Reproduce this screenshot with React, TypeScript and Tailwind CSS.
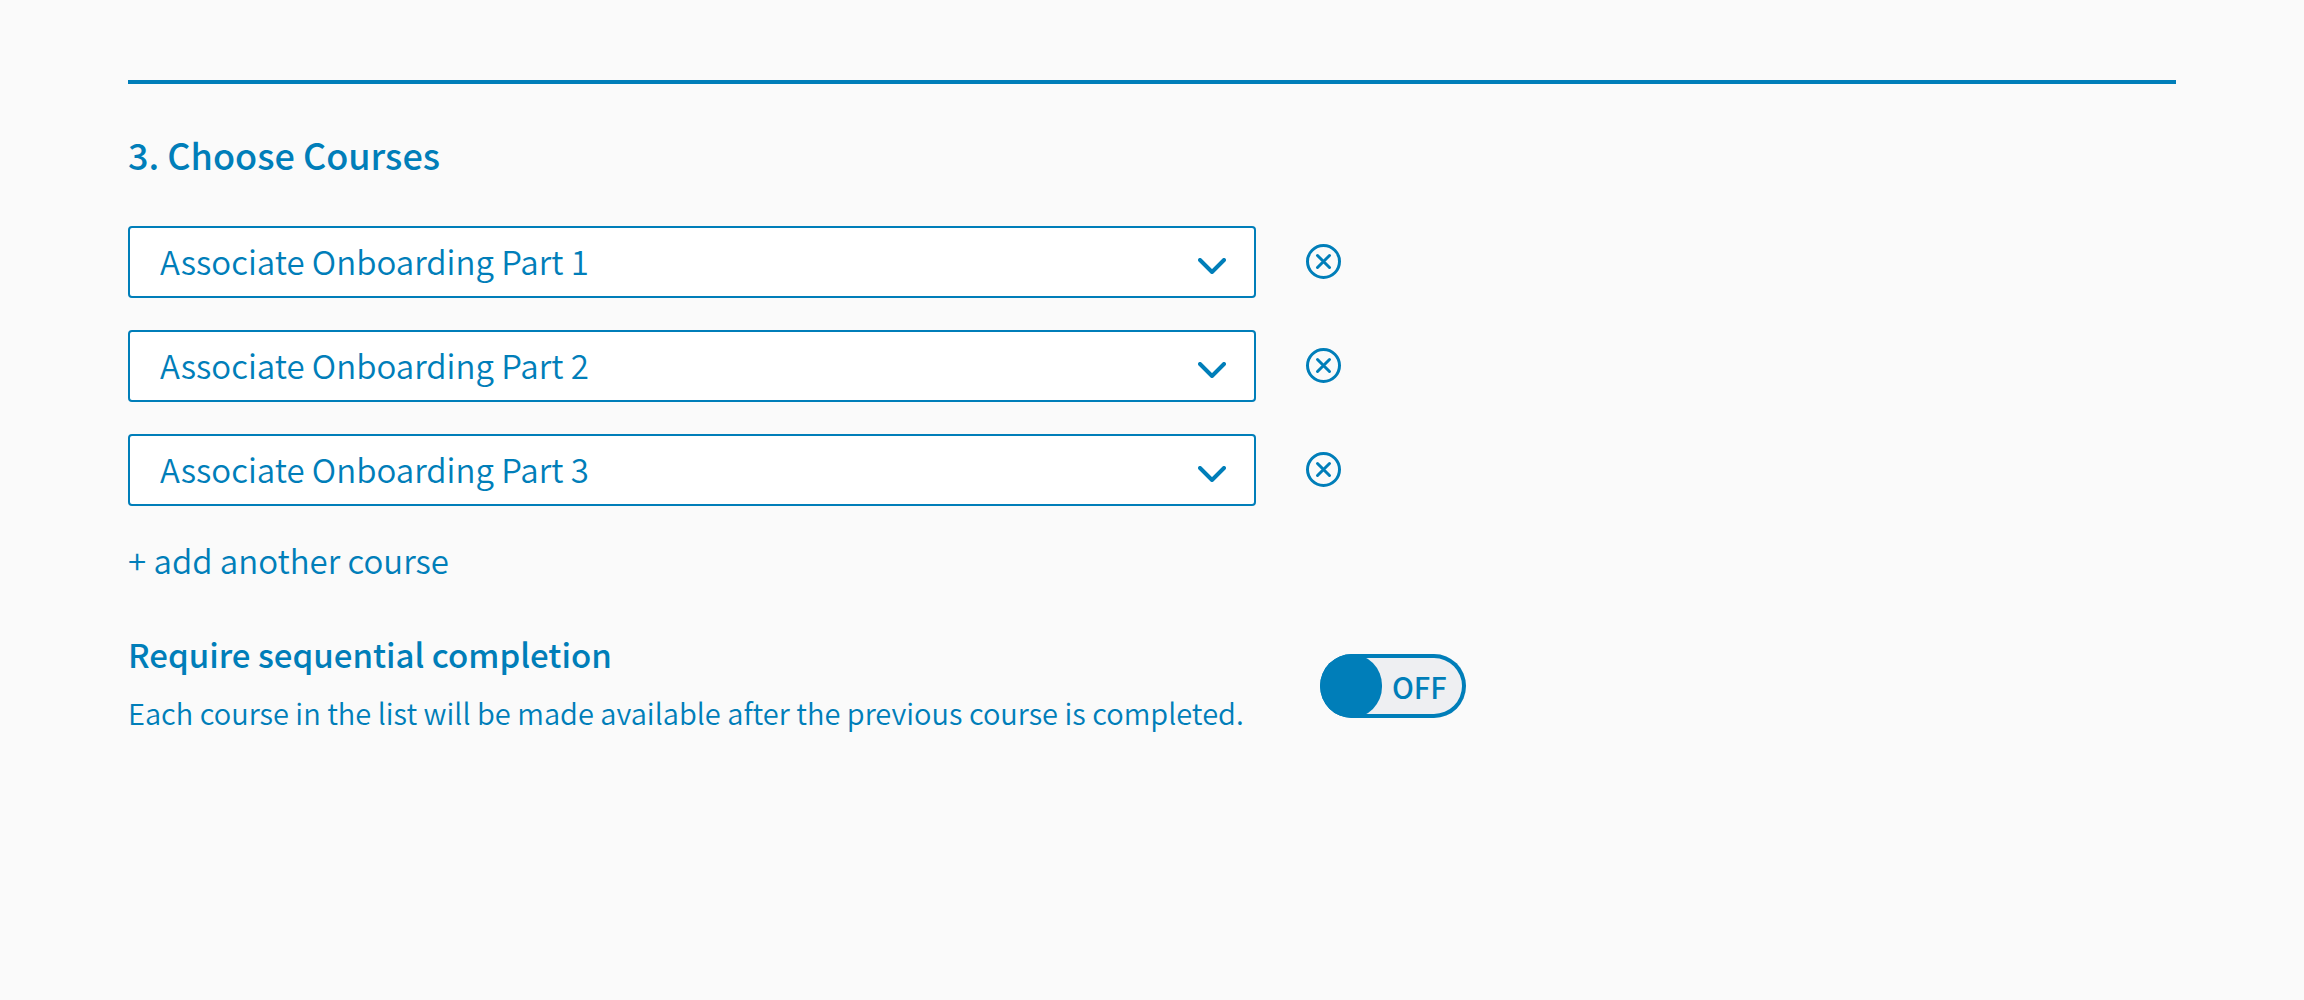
import { useState } from "react";

const COURSES = [
  "Associate Onboarding Part 1",
  "Associate Onboarding Part 2",
  "Associate Onboarding Part 3",
];

function ChevronIcon() {
  return (
    <svg
      aria-hidden="true"
      viewBox="0 0 28 16"
      className="pointer-events-none absolute top-8 right-[30px] h-4 w-7"
      fill="none"
      stroke="currentColor"
      strokeWidth="4"
      strokeLinecap="round"
      strokeLinejoin="round"
    >
      <path d="M2 2l12 12L26 2" />
    </svg>
  );
}

function RemoveIcon() {
  return (
    <svg
      aria-hidden="true"
      viewBox="0 0 36 36"
      className="size-9"
      fill="none"
      stroke="currentColor"
      strokeWidth="3"
      strokeLinecap="round"
    >
      <circle cx="17.5" cy="17.5" r="16" />
      <path d="M11.5 11.5l12 12M23.5 11.5l-12 12" />
    </svg>
  );
}

type CourseRowProps = {
  index: number;
  value: string;
  onChange: (value: string) => void;
  onRemove: () => void;
};

function CourseRow({ index, value, onChange, onRemove }: CourseRowProps) {
  return (
    <li className="flex items-center gap-[50px]">
      <div className="relative w-full max-w-[1128px]">
        <select
          aria-label={`Course ${index + 1}`}
          value={value}
          onChange={(e) => onChange(e.target.value)}
          className="block h-[72px] w-full cursor-pointer appearance-none rounded-sm border-2 border-[#007eb9] bg-white pr-20 pl-[30px] text-[33px] text-[#007eb9]"
        >
          {COURSES.map((course) => (
            <option key={course}>{course}</option>
          ))}
        </select>
        <ChevronIcon />
      </div>
      <button
        type="button"
        aria-label={`Remove course ${index + 1}`}
        onClick={onRemove}
        className="shrink-0 cursor-pointer"
      >
        <RemoveIcon />
      </button>
    </li>
  );
}

export default function App() {
  const [courses, setCourses] = useState(COURSES);
  const [sequential, setSequential] = useState(false);

  return (
    <main className="min-h-screen bg-[#fafafa] px-32 pt-20 pb-20 font-['Noto_Sans_CJK_SC',sans-serif] font-[350] text-[#007eb9]">
      <section className="border-t-4 border-[#007eb9] pt-[46px]">
        <h2 className="text-[36px] leading-[48px] font-medium">3. Choose Courses</h2>

        <ul className="mt-12 flex flex-col gap-8">
          {courses.map((course, i) => (
            <CourseRow
              key={i}
              index={i}
              value={course}
              onChange={(value) => setCourses(courses.map((c, j) => (j === i ? value : c)))}
              onRemove={() => setCourses(courses.filter((_, j) => j !== i))}
            />
          ))}
        </ul>

        <button
          type="button"
          onClick={() => setCourses([...courses, COURSES[0]])}
          className="mt-[30px] block cursor-pointer text-[33px] leading-[48px]"
        >
          + add another course
        </button>

        <div className="mt-[46px] flex items-center gap-16">
          <div className="w-full max-w-[1128px]">
            <h3 id="sequential-title" className="text-[33px] leading-[48px] font-medium">
              Require sequential completion
            </h3>
            <p id="sequential-help" className="mt-[10px] text-[29px] leading-[48px]">
              Each course in the list will be made available after the previous course is completed.
            </p>
          </div>
          <label className="mt-1.5 flex h-16 w-[146px] shrink-0 cursor-pointer items-center overflow-hidden rounded-full bg-[#eeeff2] text-[29px] leading-none font-medium inset-ring-4 inset-ring-[#007eb9] has-checked:flex-row-reverse">
            <input
              type="checkbox"
              role="switch"
              aria-labelledby="sequential-title"
              aria-describedby="sequential-help"
              checked={sequential}
              onChange={(e) => setSequential(e.target.checked)}
              className="h-16 w-[62px] shrink-0 cursor-pointer appearance-none rounded-full bg-[#007eb9]"
            />
            <span className="px-[10px]">{sequential ? "ON" : "OFF"}</span>
          </label>
        </div>
      </section>
    </main>
  );
}
